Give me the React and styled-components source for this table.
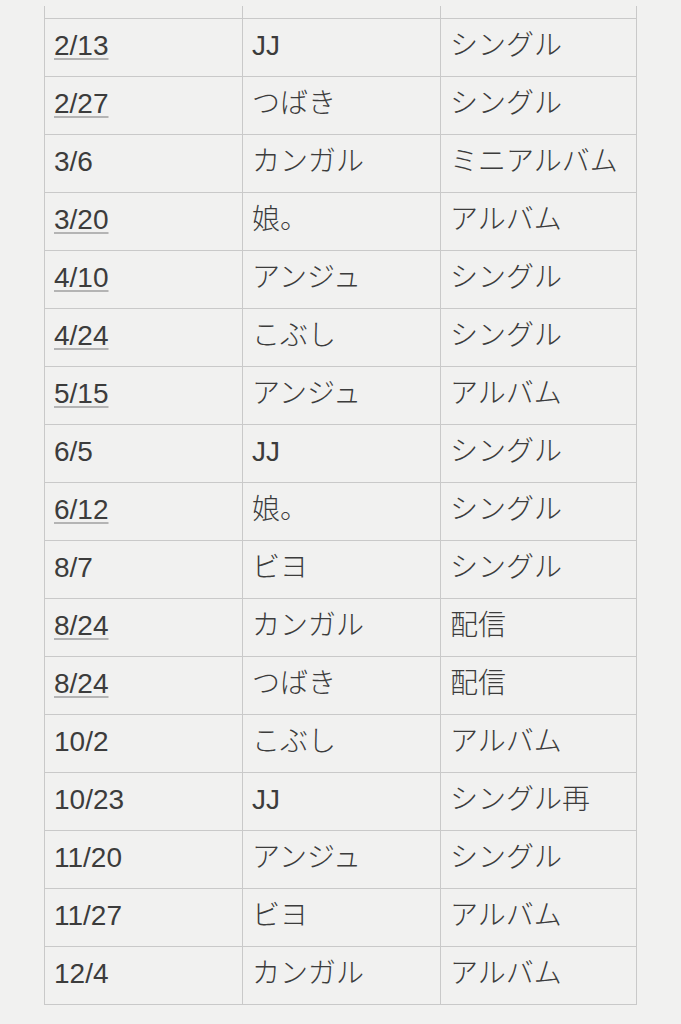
import React from "react";
import styled, { createGlobalStyle } from "styled-components";

const Global = createGlobalStyle`
  html, body {
    margin: 0;
    padding: 0;
    background: #f1f1f0;
  }
  body {
    font-family: "Liberation Sans", "Noto Sans CJK JP", sans-serif;
    -webkit-font-smoothing: antialiased;
  }
`;

const Page = styled.div`
  width: 681px;
  height: 1024px;
  overflow: hidden;
  padding-top: 6px;
  box-sizing: border-box;
  background: #f1f1f0;
`;

const Sheet = styled.div`
  margin-left: 44px;
  width: 593px;
  border-bottom: 1px solid #c9c9c9;
`;

const COLS = "198px 198px 197px";

const Stub = styled.div`
  display: grid;
  grid-template-columns: ${COLS};
  height: 12px;
`;

const Row = styled.div`
  display: grid;
  grid-template-columns: ${COLS};
  height: 58px;
  box-sizing: border-box;
  border-top: 1px solid #c9c9c9;
`;

const Cell = styled.div`
  box-sizing: border-box;
  border-left: 1px solid #c9c9c9;
  border-right: ${(p) => (p.$last ? "1px solid #c9c9c9" : "none")};
  display: flex;
  align-items: center;
  padding: 0 0 3px 9px;
  font-size: 28px;
  line-height: 32px;
  color: #3c3c3c;
  white-space: nowrap;
`;

const Text = styled.span`
  font-weight: ${(p) => (p.$latin ? 400 : 300)};
  text-decoration: ${(p) => (p.$linked ? "underline" : "none")};
  text-decoration-color: #b4b4b4;
  text-decoration-thickness: 2px;
  text-underline-offset: 3px;
`;

const isLatin = (s) => /^[\x00-\x7f]+$/.test(s);

const rows = [
  ["2/13", "JJ", "シングル", true],
  ["2/27", "つばき", "シングル", true],
  ["3/6", "カンガル", "ミニアルバム", false],
  ["3/20", "娘。", "アルバム", true],
  ["4/10", "アンジュ", "シングル", true],
  ["4/24", "こぶし", "シングル", true],
  ["5/15", "アンジュ", "アルバム", true],
  ["6/5", "JJ", "シングル", false],
  ["6/12", "娘。", "シングル", true],
  ["8/7", "ビヨ", "シングル", false],
  ["8/24", "カンガル", "配信", true],
  ["8/24", "つばき", "配信", true],
  ["10/2", "こぶし", "アルバム", false],
  ["10/23", "JJ", "シングル再", false],
  ["11/20", "アンジュ", "シングル", false],
  ["11/27", "ビヨ", "アルバム", false],
  ["12/4", "カンガル", "アルバム", false],
];

export default function App() {
  return (
    <Page>
      <Global />
      <Sheet>
        <Stub>
          <Cell />
          <Cell />
          <Cell $last />
        </Stub>
        {rows.map(([d, a, t, linked], i) => (
          <Row key={i}>
            <Cell>
              <Text $latin $linked={linked}>{d}</Text>
            </Cell>
            <Cell>
              <Text $latin={isLatin(a)}>{a}</Text>
            </Cell>
            <Cell $last>
              <Text $latin={isLatin(t)}>{t}</Text>
            </Cell>
          </Row>
        ))}
      </Sheet>
    </Page>
  );
}
